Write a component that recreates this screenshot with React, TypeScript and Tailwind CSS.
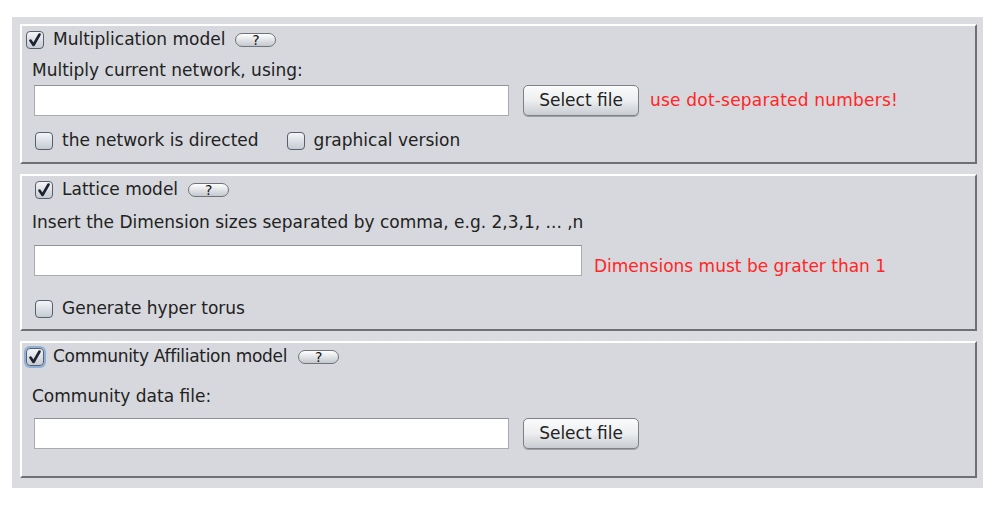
import React from "react";

const font = { fontFamily: '"DejaVu Sans", "Liberation Sans", sans-serif' };

function Check({ checked, focused }: { checked?: boolean; focused?: boolean }) {
  return (
    <div
      className={
        "w-[18px] h-[18px] rounded-[4px] border border-[#58606c] bg-gradient-to-b from-[#f4f5f7] to-[#c6cbd3] flex items-center justify-center shrink-0 " +
        (focused ? "shadow-[0_0_0_2px_#8fb0d8]" : "")
      }
    >
      {checked && (
        <svg width="14" height="14" viewBox="0 0 14 14">
          <path d="M2.5 7.5 L5.5 12 L11.5 1.5" stroke="#1c2230" strokeWidth="2.6" fill="none" strokeLinecap="round" strokeLinejoin="round" />
        </svg>
      )}
    </div>
  );
}

function Help() {
  return (
    <div className="w-[41px] h-[14px] rounded-full border border-[#707479] bg-gradient-to-b from-[#ffffff] to-[#c4c8ce] flex items-center justify-center text-[14px] font-normal leading-none text-[#111]">
      ?
    </div>
  );
}

function Field({ w }: { w: string }) {
  return <div className={w + " h-[31px] bg-white border border-[#a9abb0] border-t-[#8f9196]"} />;
}

function SelectBtn() {
  return (
    <div className="w-[116px] h-[31px] rounded-[5px] border border-[#7d8085] bg-gradient-to-b from-[#fbfbfc] via-[#eceef0] to-[#c9ccd1] flex items-center justify-center text-[17px] text-[#222] shadow-[0_1px_0_#9ea1a6] pt-[1px]">
      Select file
    </div>
  );
}

export default function App() {
  return (
    <div className="w-[1000px] h-[505px] bg-white pt-[17px] pl-[12px]" style={font}>
      <div className="w-[971px] h-[471px] bg-[#dadce0] pt-[7px] pl-[8px] pr-[6px] flex flex-col gap-[10px] text-[#222] text-[17px]">
        {/* Panel 1 */}
        <div className="h-[140px] bg-[#d6d8dd] border-2 border-t-white border-l-white border-b-[#6e7075] border-r-[#6e7075] flex flex-col">
          <div className="flex items-center h-[21px] mt-[3px] ml-[4px]">
            <Check checked />
            <span className="ml-[9px]">Multiplication model</span>
            <div className="ml-[10px]"><Help /></div>
          </div>
          <div className="ml-[10px] mt-[10px] h-[22px] flex items-center">Multiply current network, using:</div>
          <div className="flex items-center ml-[12px] mt-[3px]">
            <Field w="w-[475px]" />
            <div className="ml-[14px]"><SelectBtn /></div>
            <span className="ml-[11px] text-[#ff2626] tracking-[0.2px]">use dot-separated numbers!</span>
          </div>
          <div className="flex items-center ml-[13px] mt-[15px] h-[20px]">
            <Check />
            <span className="ml-[9px]">the network is directed</span>
            <div className="ml-[28px]"><Check /></div>
            <span className="ml-[9px]">graphical version</span>
          </div>
        </div>
        {/* Panel 2 */}
        <div className="h-[157px] bg-[#d6d8dd] border-2 border-t-white border-l-white border-b-[#6e7075] border-r-[#6e7075] flex flex-col">
          <div className="flex items-center h-[21px] mt-[3px] ml-[13px]">
            <Check checked />
            <span className="ml-[9px]">Lattice model</span>
            <div className="ml-[10px]"><Help /></div>
          </div>
          <div className="ml-[10px] mt-[12px] h-[22px] flex items-center">Insert the Dimension sizes separated by comma, e.g. 2,3,1, ... ,n</div>
          <div className="flex items-center ml-[12px] mt-[8px]">
            <Field w="w-[548px]" />
            <span className="ml-[12px] text-[#ff2626] mt-[12px]">Dimensions must be grater than 1</span>
          </div>
          <div className="flex items-center ml-[13px] mt-[19px] h-[20px]">
            <Check />
            <span className="ml-[9px]">Generate hyper torus</span>
          </div>
        </div>
        {/* Panel 3 */}
        <div className="h-[137px] bg-[#d6d8dd] border-2 border-t-white border-l-white border-b-[#6e7075] border-r-[#6e7075] flex flex-col">
          <div className="flex items-center h-[21px] mt-[3px] ml-[4px]">
            <Check checked focused />
            <span className="ml-[9px] tracking-[-0.3px]">Community Affiliation model</span>
            <div className="ml-[11px]"><Help /></div>
          </div>
          <div className="ml-[10px] mt-[19px] h-[22px] flex items-center">Community data file:</div>
          <div className="flex items-center ml-[12px] mt-[10px]">
            <Field w="w-[475px]" />
            <div className="ml-[14px]"><SelectBtn /></div>
          </div>
        </div>
      </div>
    </div>
  );
}
